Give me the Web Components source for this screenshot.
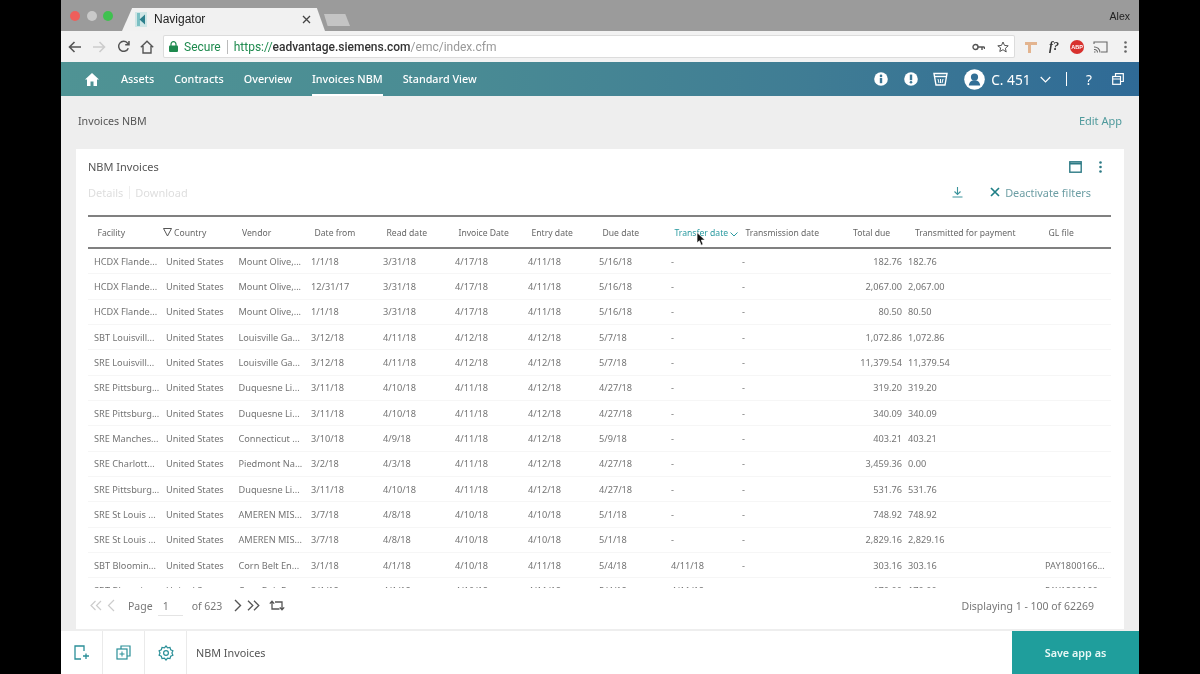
<!DOCTYPE html>
<html><head><meta charset="utf-8"><title>Navigator</title>
<style>
html,body{margin:0;height:674px;background:#000;overflow:hidden}
body{display:flex;justify-content:center;font-family:"Noto Sans","Liberation Sans",sans-serif}
</style></head><body>
<x-app>
  <x-tabbar></x-tabbar>
  <x-toolbar></x-toolbar>
  <x-navbar></x-navbar>
  <x-subhead></x-subhead>
  <x-card>
    <x-grid-row head><span>Facility</span><span class="f">Country</span><span>Vendor</span><span>Date from</span><span>Read date</span><span>Invoice Date</span><span>Entry date</span><span>Due date</span><span class="s">Transfer date</span><span>Transmission date</span><span class="t">Total due</span><span class="p">Transmitted for payment</span><span>GL file</span></x-grid-row>
    <x-grid-body id="rows"></x-grid-body>
  </x-card>
  <x-footer></x-footer>
</x-app>
<script>
function def(name, html, init){
  customElements.define(name, class extends HTMLElement{
    constructor(){super();this.attachShadow({mode:'open'}).innerHTML=html;}
    connectedCallback(){ if(init) init.call(this); }
  });
}
const ico=(w,h,vb,body,extra='')=>`<svg width="${w}" height="${h}" viewBox="${vb}" fill="none" ${extra}>${body}</svg>`;

def('x-app',`<style>:host{display:flex;flex-direction:column;width:1078px;height:674px;background:#fff;position:relative;overflow:hidden;filter:blur(.45px)}
.cursor{position:absolute;left:635px;top:232px}</style><slot></slot>
<svg class="cursor" width="10" height="15" viewBox="0 0 10 15"><path d="M1 .5V11l2.400-2.200 1.700 4.400 2-.8-1.800-4.300H9z" fill="#111" stroke="#fff" stroke-width=".7"/></svg>`);

def('x-tabbar',`<style>:host{display:flex;height:31px;background:#9b9b9b;align-items:flex-end;color:#222;position:relative;flex:none}
.lights{display:flex;gap:6.500px;align-self:flex-start;margin:11px 0 0 9px;width:60px;flex:none}
.lights i{width:10px;height:10px;border-radius:50%}
.tab{width:203px;height:23px;margin-left:-8px;background:#f1f1f1;clip-path:polygon(0 100%,5% 0,96% 0,100% 100%);display:flex;align-items:center;box-sizing:border-box;padding:0 14px 1px 13px;gap:7px;font:12px "Liberation Sans",sans-serif;flex:none}
.tab span{flex:1}
.new{width:26px;height:12px;margin:0 0 5px -1px;background:#c4c4c4;clip-path:polygon(14% 100%,0 0,82% 0,100% 100%);flex:none}
.alex{margin-left:auto;align-self:flex-start;margin-top:10px;margin-right:9px;font:10.500px "Liberation Sans",sans-serif;color:#222}
</style>
<div class="lights"><i style="background:#ee5f5b"></i><i style="background:#c9c9c9"></i><i style="background:#3fc14f"></i></div>
<div class="tab">${ico(12,15,'0 0 12 15','<rect width="12" height="15" fill="#cfe6e6"/><path d="M2 1h3v13H2z" fill="#7cc0c4"/><path d="M10 2.500 4.500 7.500 10 12.500z" fill="#2c7f8c"/>')}<span>Navigator</span>${ico(9,9,'0 0 9 9','<path d="M1 1l7 7M8 1 1 8" stroke="#444" stroke-width="1.300"/>')}</div>
<div class="new"></div><div class="alex">Alex</div>`);

def('x-toolbar',`<style>:host{display:flex;height:31px;background:#f2f2f2;align-items:center;flex:none;box-sizing:border-box;padding-left:2px}
.btn{width:24px;display:flex;justify-content:center}
.box{margin-left:5px;width:850px;height:21px;background:#fff;box-shadow:0 0 0 1px #dcdcdc;border-radius:1px;display:flex;align-items:center;box-sizing:border-box;padding:0 5px 0 5px;font:12px Roboto,"Liberation Sans",sans-serif;color:#999;white-space:nowrap;flex:none}
.g{color:#1e8a4e}.d{color:#333;font-weight:500}.sep{width:1px;height:14px;background:#bbb;margin:0 6px}
.end{margin-left:auto;display:flex;align-items:center;gap:12px}
.ext{display:flex;align-items:center;margin-left:10px}
.ext>*{flex:none}
.f{font:italic bold 12px "Liberation Serif",serif;color:#333;width:32px;text-align:center}
.abp{width:14px;height:14px;border-radius:50%;background:#d8312e;color:#fff;font:bold 5.500px "Liberation Sans",sans-serif;display:flex;align-items:center;justify-content:center}
</style>
<div class="btn">${ico(14,12,'0 0 14 12','<path d="M13 6H2M6.500 1 1.500 6l5 5" stroke="#555" stroke-width="1.600"/>')}</div>
<div class="btn">${ico(14,12,'0 0 14 12','<path d="M1 6h11M7.500 1l5 5-5 5" stroke="#ccc" stroke-width="1.600"/>')}</div>
<div class="btn">${ico(13,13,'0 0 13 13','<path d="M11.300 8.200A5 5 0 1 1 10.400 3L12 4.600M12 1v3.800H8.200" stroke="#555" stroke-width="1.500"/>')}</div>
<div class="btn">${ico(14,14,'0 0 14 14','<path d="M.8 7.200 7 1.200l6.200 6M3 6v7h8V6" stroke="#555" stroke-width="1.400"/>')}</div>
<div class="box">${ico(9,11,'0 0 9 11','<rect y="4.500" width="9" height="6.500" rx="1" fill="#1e8a4e"/><path d="M2 5V3.200a2.500 2.500 0 0 1 5 0V5" stroke="#1e8a4e" stroke-width="1.200"/>')}
<span class="g" style="margin-left:6px">Secure</span><span class="sep"></span><span class="g">https://</span><span class="d">eadvantage.siemens.com</span><span>/emc/index.cfm</span>
<span class="end">${ico(13,8,'0 0 13 8','<circle cx="3.500" cy="4" r="2.500" stroke="#555" stroke-width="1.400"/><path d="M6 4h6.500M10 4v3M12.500 4v2" stroke="#555" stroke-width="1.400"/>')}${ico(12,12,'0 0 12 12','<path d="m6 1 1.500 3.400 3.700.4-2.800 2.500.8 3.700L6 8.700l-3.200 1.800.8-3.700L.8 4.800l3.700-.4z" stroke="#555"/>')}</span></div>
<div class="ext">
${ico(14,14,'0 0 14 14','<path d="M1 2h12v3H7v8H4V5H1z" fill="#e3b48f"/>')}
<span class="f">f?</span><span class="abp">ABP</span>
<span style="width:8.500px"></span>${ico(15,12,'0 0 15 12','<path d="M1 3V1h13v10H8M1 11h1.500M1 8.500A3 3 0 0 1 4.500 11.500M1 6a5.500 5.500 0 0 1 6 5.500" stroke="#666" stroke-width="1.100"/>')}
<span style="width:16px"></span>${ico(3,12,'0 0 3 12','<circle cx="1.500" cy="1.500" r="1.300" fill="#666"/><circle cx="1.500" cy="6" r="1.300" fill="#666"/><circle cx="1.500" cy="10.500" r="1.300" fill="#666"/>')}
</div>`);

def('x-navbar',`<style>:host{display:flex;height:34px;background:linear-gradient(90deg,#4f9394 0%,#4a8c94 35%,#3f7c94 70%,#2f6a96 100%);align-items:stretch;color:#fff;font-size:10.800px;font-weight:500;flex:none;box-sizing:border-box;padding-left:24px}
.home{width:36px;display:flex;align-items:center}
a{display:flex;align-items:center;margin-right:20px;white-space:nowrap;box-sizing:border-box;height:34px;border-bottom:2px solid transparent;padding-top:1px}
a.on{border-bottom-color:#fff}
.r{margin-left:auto;display:flex;align-items:center;padding-right:15px}
.c{font-size:13.700px;font-weight:400}
</style>
<div class="home">${ico(14,13,'0 0 14 13','<path d="M7 0 0 6.500h2V13h3.500V8.500h3V13H12V6.500h2z" fill="#fff"/>')}</div>
<a>Assets</a><a>Contracts</a><a>Overview</a><a class="on">Invoices NBM</a><a>Standard View</a>
<div class="r">
${ico(14,14,'0 0 14 14','<circle cx="7" cy="7" r="6.800" fill="#fff"/><rect x="5.800" y="6" width="2.400" height="5.200" fill="#3a7695"/><circle cx="7" cy="3.900" r="1.300" fill="#3a7695"/>')}
<span style="width:16px"></span>${ico(14,14,'0 0 14 14','<circle cx="7" cy="7" r="6.800" fill="#fff"/><rect x="5.800" y="2.600" width="2.400" height="5.600" fill="#3a7695"/><circle cx="7" cy="10.300" r="1.300" fill="#3a7695"/>')}
<span style="width:14.500px"></span>${ico(15,14,'0 0 15 14','<path d="M1 1.500h13l-2 11.500H3z" stroke="#fff" stroke-width="1.400"/><path d="M1.500 4.500h12" stroke="#fff" stroke-width="1.400"/><path d="M5 7l1 4M7.500 7v4M10 7l-1 4" stroke="#fff" stroke-width="1"/>')}
<span style="width:16px"></span>${ico(21,21,'0 0 21 21','<circle cx="10.500" cy="10.500" r="10.300" fill="#fff"/><circle cx="10.500" cy="8" r="3.600" fill="#336f96"/><path d="M4.800 16.500c.4-3.700 2.600-5.300 5.700-5.300s5.300 1.600 5.700 5.300z" fill="#336f96"/>')}
<span class="c" style="margin-left:6.500px">C. 451</span>
<span style="width:9.500px"></span>${ico(11,7,'0 0 11 7','<path d="m.7 1 4.800 4.800L10.300 1" stroke="#fff" stroke-width="1.200"/>')}
<span style="width:14.500px"></span><span style="width:1.500px;height:14px;background:#fff"></span>
<span style="width:19px"></span><span class="c">?</span>
<span style="width:20px"></span>${ico(12,12,'0 0 12 12','<path d="M3.500 3V.7h7.800v7.800H9" stroke="#fff" stroke-width="1.200"/><rect x=".7" y="3.500" width="7.800" height="7.800" stroke="#fff" stroke-width="1.200"/><path d="M.7 6h7.800" stroke="#fff"/>')}
</div>`);

def('x-subhead',`<style>:host{display:flex;height:53px;background:#eeeeee;align-items:flex-start;justify-content:space-between;box-sizing:border-box;padding:18px 17px 0 17px;font-size:10.700px;color:#555;flex:none}
.e{color:#4f9a9c;font-size:11px;margin-top:-1px}</style><span>Invoices NBM</span><span class="e">Edit App</span>`);

def('x-card',`<style>:host{display:block;flex:none;height:482px;background:#eee;box-sizing:border-box;padding:0 15px 2px}
.card{background:#fff;height:480px;box-sizing:border-box;padding:0 13px 0 12px;font-size:10.500px;color:#666}
.title{height:35px;display:flex;align-items:center;justify-content:space-between;font-size:11px;color:#555;padding-right:9px}
.pick{display:flex;align-items:center;gap:17px;margin-top:1px}
.acts{height:16px;display:flex;align-items:center;justify-content:space-between;margin-bottom:15px;font-size:11px}
.off{color:#dedede;display:flex;gap:5.500px;align-items:center}
.off i{width:1px;height:13px;background:#eee}
.on{display:flex;align-items:center;color:#6d9ea4;padding-right:20px;font-size:10.900px}
.pager{height:35px;display:flex;align-items:center;color:#777;font-size:10.500px;padding:0 17px 0 1px}
.pager .u{width:25px;margin:0 9px 0 5px;box-sizing:border-box;padding-left:5px;height:20px;line-height:20px;border-bottom:1px solid #e4e4e4;color:#777}
.sp{margin-left:auto}
</style><div class="card">
<div class="title"><span>NBM Invoices</span><span class="pick">${ico(13,12,'0 0 13 12','<rect x=".8" y=".8" width="11.400" height="10.400" stroke="#2d7a85" stroke-width="1.400"/><path d="M.8 2.500h11.400" stroke="#2d7a85" stroke-width="2"/>')}${ico(3,12,'0 0 3 12','<circle cx="1.500" cy="1.500" r="1.300" fill="#2d7a85"/><circle cx="1.500" cy="6" r="1.300" fill="#2d7a85"/><circle cx="1.500" cy="10.500" r="1.300" fill="#2d7a85"/>')}</span></div>
<div class="acts"><span class="off">Details<i></i>Download</span>
<span class="on">${ico(11,12,'0 0 11 12','<path d="M5.500 1v7M2.500 5.500l3 3 3-3M.500 11h10" stroke="#3c949c" stroke-width="1.100"/>')}<span style="width:27px"></span>${ico(10,10,'0 0 10 10','<path d="m1 1 8 8M9 1 1 9" stroke="#1f7f86" stroke-width="1.700"/>')}<span style="margin-left:5.500px">Deactivate filters</span></span></div>
<slot></slot>
<div class="pager">${ico(14,11,'0 0 14 11','<path d="M6.500 1 2 5.500 6.500 10M12 1 7.500 5.500 12 10" stroke="#ccc" stroke-width="1.200"/>')}<span style="width:4px"></span>${ico(8,13,'0 0 8 13','<path d="M7 1 1.500 6.500 7 12" stroke="#ccc" stroke-width="1.200"/>')}
<span style="margin-left:13px">Page</span><span class="u">1</span><span>of 623</span>
<span style="width:12px"></span>${ico(8,13,'0 0 8 13','<path d="M1 1l5.500 5.500L1 12" stroke="#555" stroke-width="1.400"/>')}<span style="width:5px"></span>${ico(13,11,'0 0 13 11','<path d="M1 .7l4.800 4.800L1 10.300M7 .7l4.800 4.800L7 10.300" stroke="#555" stroke-width="1.300"/>')}<span style="width:9px"></span>${ico(16,13,'0 0 16 13','<path d="M3 3v7h7.500M.8 4.600 3 2.200l2.200 2.400M6 3h7v7M10.800 8.400l2.200 2.400 2.200-2.400" stroke="#555" stroke-width="1.300"/>')}
<span class="sp">Displaying 1 - 100 of 62269</span></div>
</div>`);

def('x-grid-body',`<style>:host{display:block;height:339px;overflow:hidden;flex:none}</style><slot></slot>`);

const COLS='72px 72.500px 72.500px 72px 72px 73px 71px 72px 71px 72px 94px 137px 72px';
def('x-grid-row',`<style>:host{display:grid;grid-template-columns:${COLS};height:25.330px;align-items:center;box-sizing:border-box;border-bottom:1px solid #f6f6f6;font-size:9.200px;color:#747474;white-space:nowrap}
:host([head]){height:34px;border-top:2px solid #808080;border-bottom:2px solid #808080;color:#666;font-size:8.600px;padding-top:2px}
::slotted(span){padding-left:6px;min-width:0;box-sizing:border-box}
:host([head]) ::slotted(span){padding-left:9.500px}
::slotted(.r){text-align:right;padding-left:0;padding-right:0}
:host([head]) ::slotted(.t){padding-left:45px}
:host([head]) ::slotted(.p){padding-left:13px}
:host([head]) ::slotted(.f){padding-left:1px}
:host([head]) ::slotted(.s){color:#2a9aa0}
</style><slot></slot>`);

def('x-footer',`<style>:host{display:flex;height:43px;background:#fff;flex:none;align-items:stretch;font-size:10.800px;color:#555}
.c{width:42px;box-sizing:border-box;border-right:1px solid #eaeaea;display:flex;align-items:center;justify-content:center}
.t{margin-left:9px;display:flex;align-items:center;flex:1}
.s{width:127px;background:#1f9e9c;color:#e8f8f6;font-weight:600;display:flex;align-items:center;justify-content:center}
</style>
<div class="c">${ico(15,15,'0 0 15 15','<path d="M9 1H1v13h6M9 1h1v5M9 11h6M12 8.500v5.500" stroke="#2a8f98" stroke-width="1.300"/>')}</div>
<div class="c">${ico(15,15,'0 0 15 15','<path d="M5 4V1h9v10h-3" stroke="#2a8f98" stroke-width="1.200"/><rect x="1" y="4" width="10" height="10" stroke="#2a8f98" stroke-width="1.200"/><path d="M6 6.500v5M3.500 9h5" stroke="#2a8f98"/>')}</div>
<div class="c">${ico(16,16,'0 0 16 16','<path d="M8 1l1.600 1.800 2.400-.3.700 2.300 2.200 1-1 2.200 1 2.200-2.200 1-.7 2.300-2.400-.3L8 15l-1.600-1.800-2.400.3-.7-2.300-2.200-1L2 8 1.100 5.800l2.200-1 .7-2.300 2.400.3z" stroke="#2a8f98" stroke-width="1.200"/><circle cx="8" cy="8" r="2.400" stroke="#2a8f98" stroke-width="1.200"/>')}</div>
<div class="t">NBM Invoices</div><div class="s">Save app as</div>`);

const H='HCDX Flande...',U='United States',M='Mount Olive,...',P='SRE Pittsburg...',Q='Duquesne Li...',A='AMEREN MIS...',S='SRE St Louis ...',B='SBT Bloomin...',C='Corn Belt En...',L='Louisville Ga...';
const data=[
[H,M,'1/1/18','3/31/18','4/17/18','4/11/18','5/16/18','-','182.76','182.76',''],
[H,M,'12/31/17','3/31/18','4/17/18','4/11/18','5/16/18','-','2,067.00','2,067.00',''],
[H,M,'1/1/18','3/31/18','4/17/18','4/11/18','5/16/18','-','80.50','80.50',''],
['SBT Louisvill...',L,'3/12/18','4/11/18','4/12/18','4/12/18','5/7/18','-','1,072.86','1,072.86',''],
['SRE Louisvill...',L,'3/12/18','4/11/18','4/12/18','4/12/18','5/7/18','-','11,379.54','11,379.54',''],
[P,Q,'3/11/18','4/10/18','4/11/18','4/12/18','4/27/18','-','319.20','319.20',''],
[P,Q,'3/11/18','4/10/18','4/11/18','4/12/18','4/27/18','-','340.09','340.09',''],
['SRE Manches...','Connecticut ...','3/10/18','4/9/18','4/11/18','4/12/18','5/9/18','-','403.21','403.21',''],
['SRE Charlott...','Piedmont Na...','3/2/18','4/3/18','4/11/18','4/12/18','4/27/18','-','3,459.36','0.00',''],
[P,Q,'3/11/18','4/10/18','4/11/18','4/12/18','4/27/18','-','531.76','531.76',''],
[S,A,'3/7/18','4/8/18','4/10/18','4/10/18','5/1/18','-','748.92','748.92',''],
[S,A,'3/7/18','4/8/18','4/10/18','4/10/18','5/1/18','-','2,829.16','2,829.16',''],
[B,C,'3/1/18','4/1/18','4/10/18','4/11/18','5/4/18','4/11/18','303.16','303.16','PAY1800166...'],
[B,C,'3/1/18','4/1/18','4/10/18','4/11/18','5/4/18','4/11/18','170.00','170.00','PAY1800166...'],
];
const body=document.getElementById('rows');
for(const d of data){
  const r=document.createElement('x-grid-row');
  const vals=[d[0],U,d[1],d[2],d[3],d[4],d[5],d[6],d[7],'-',d[8],d[9],d[10]];
  vals.forEach((v,i)=>{const s=document.createElement('span');s.textContent=v;if(i==10)s.className='r';r.appendChild(s);});
  body.appendChild(r);
}
const hdr=document.querySelector('x-grid-row[head]');
const svgNS='http://www.w3.org/2000/svg';
function mini(d,w,h,col){const s=document.createElementNS(svgNS,'svg');s.setAttribute('width',w);s.setAttribute('height',h);s.setAttribute('viewBox',`0 0 ${w} ${h}`);s.style.cssText='vertical-align:-1px;margin:0 2px';const p=document.createElementNS(svgNS,'path');p.setAttribute('d',d);p.setAttribute('fill','none');p.setAttribute('stroke',col);s.appendChild(p);return s;}
const f=hdr.querySelector('.f');f.insertBefore(mini('M.5.500h8L4.500 8z',9,9,'#555'),f.firstChild);
hdr.querySelector('.s').appendChild(mini('m.5.500 3.500 3.500 3.500-3.500',8,5,'#2a9aa0'));
</script>
</body></html>
